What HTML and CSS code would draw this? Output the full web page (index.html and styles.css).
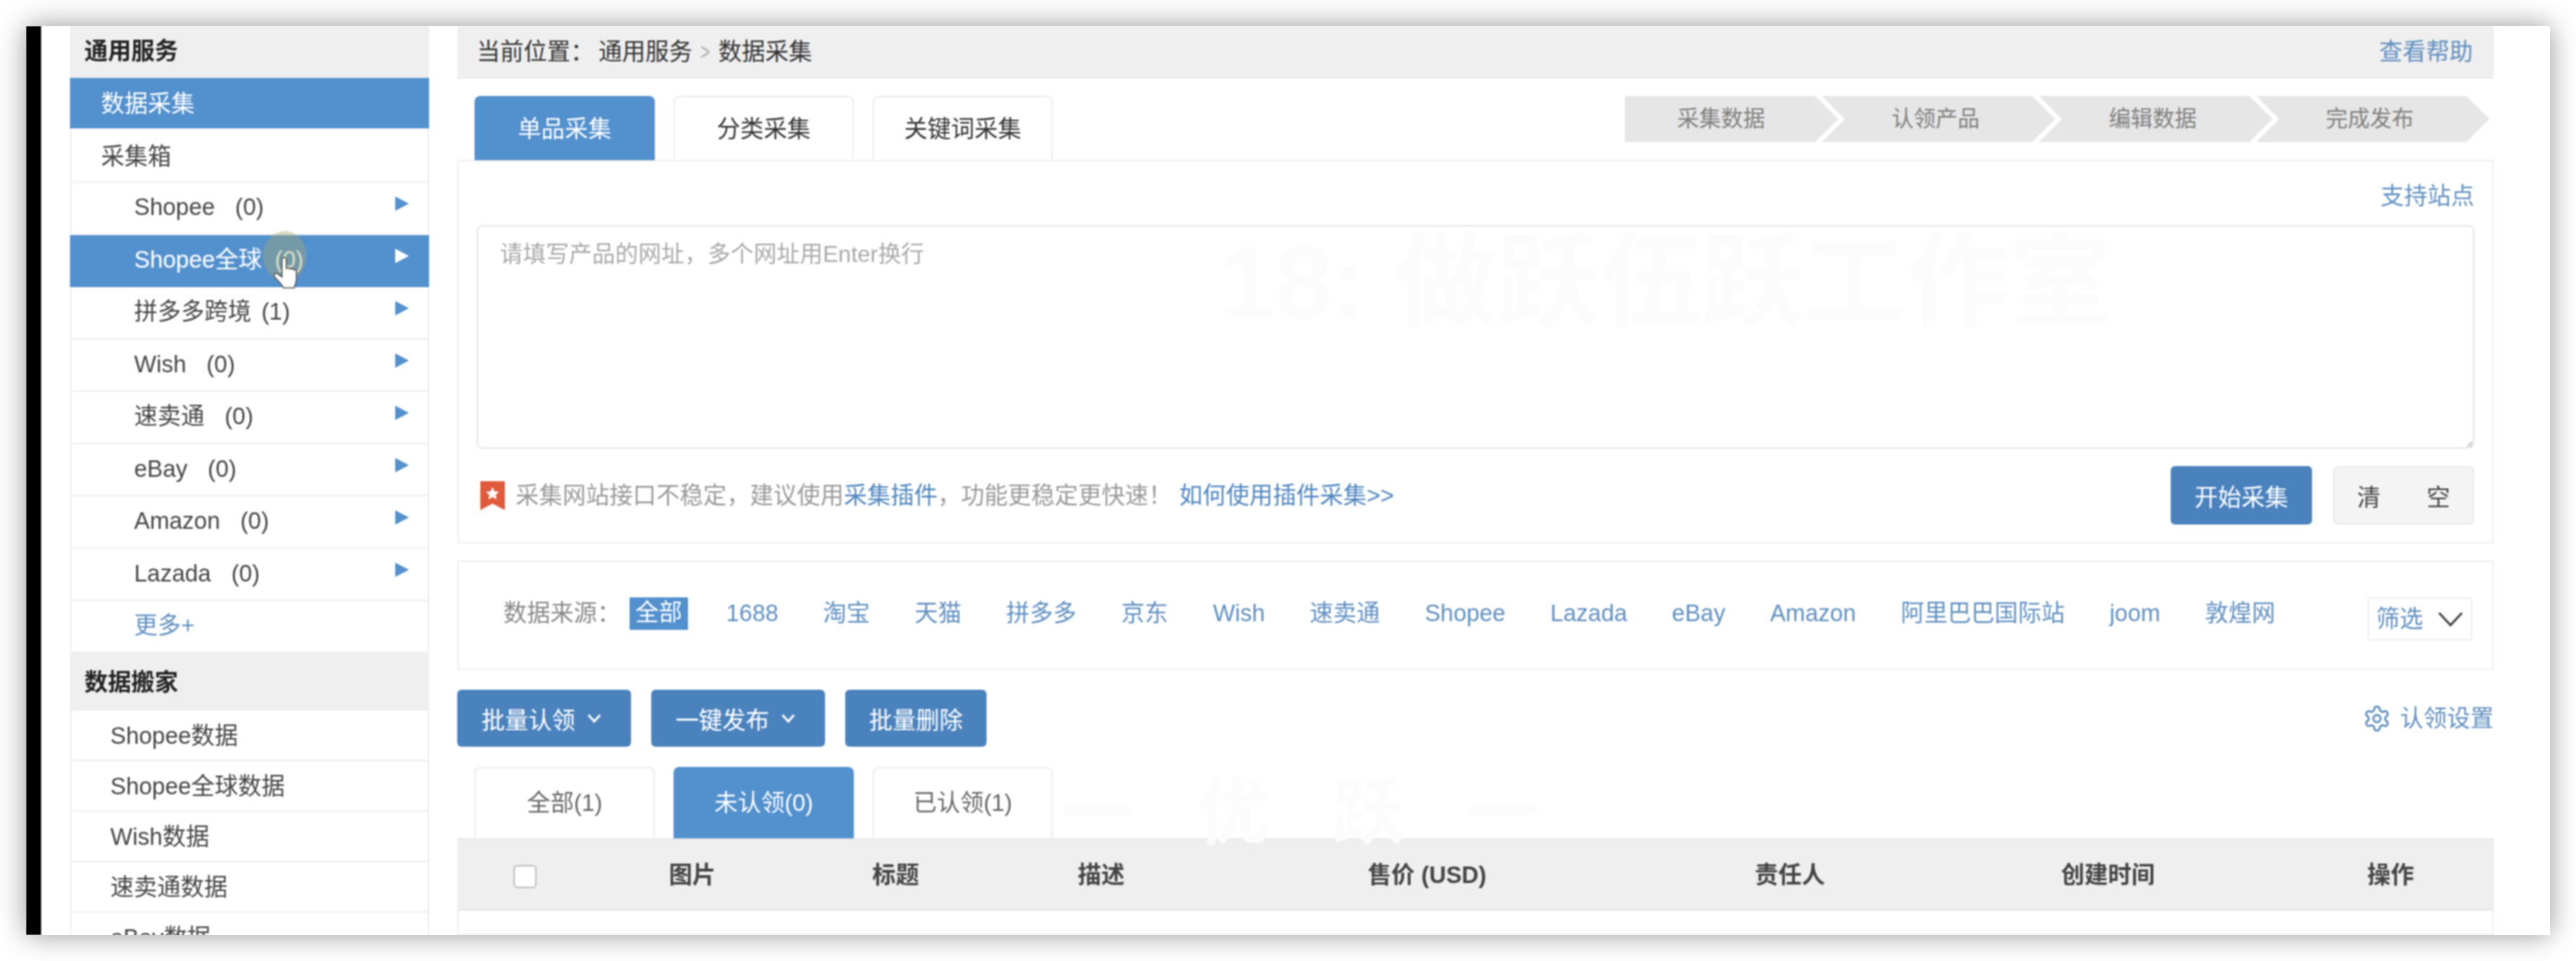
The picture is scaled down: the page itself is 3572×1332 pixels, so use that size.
FILE: index.html
```html
<!DOCTYPE html>
<html lang="zh-CN">
<head>
    <meta charset="UTF-8">
    <title>数据采集</title>
    <link rel="stylesheet" href="styles.css">
</head>
<body>
    <div class="window">
        <div class="screen">
            <div class="black-bar"></div>

            <aside class="sidebar">
                <div class="side-head">通用服务</div>
                <a href="#" class="side-item active">数据采集</a>
                <a href="#" class="side-item box-title">采集箱</a>
                <a href="#" class="side-sub"><span>Shopee<span class="count">(0)</span></span><i class="arrow"></i></a>
                <a href="#" class="side-sub active"><span>Shopee全球<span class="count">(0)</span></span><i class="arrow"></i>
                    <span class="cursor-halo"></span>
                    <svg class="cursor-hand" viewBox="0 0 34 48">
                        <path d="M12 26V6a3 3 0 0 1 6 0v12a3 3 0 0 1 5 1 3 3 0 0 1 5 1 3 3 0 0 1 4 2v10c0 6-2 9-3 13H14c-2-5-6-8-12-15-2-3 0-6 3-5l7 5z" fill="#fff" stroke="#555" stroke-width="1.6"/>
                    </svg>
                </a>
                <a href="#" class="side-sub"><span>拼多多跨境<span class="count tight">(1)</span></span><i class="arrow"></i></a>
                <a href="#" class="side-sub"><span>Wish<span class="count">(0)</span></span><i class="arrow"></i></a>
                <a href="#" class="side-sub"><span>速卖通<span class="count">(0)</span></span><i class="arrow"></i></a>
                <a href="#" class="side-sub"><span>eBay<span class="count">(0)</span></span><i class="arrow"></i></a>
                <a href="#" class="side-sub"><span>Amazon<span class="count">(0)</span></span><i class="arrow"></i></a>
                <a href="#" class="side-sub"><span>Lazada<span class="count">(0)</span></span><i class="arrow"></i></a>
                <a href="#" class="side-sub more">更多+</a>
                <div class="side-head second">数据搬家</div>
                <a href="#" class="side-move">Shopee数据</a>
                <a href="#" class="side-move">Shopee全球数据</a>
                <a href="#" class="side-move">Wish数据</a>
                <a href="#" class="side-move">速卖通数据</a>
                <a href="#" class="side-move">eBay数据</a>
            </aside>

            <main class="main">
                <div class="watermark">18: 做跃伍跃工作室</div>
                <div class="watermark lower">一 优 跃 一</div>

                <div class="crumb">
                    <div class="crumb-path">
                        <span class="crumb-label">当前位置：</span>
                        <span>通用服务</span>
                        <span class="crumb-sep">&gt;</span>
                        <span>数据采集</span>
                    </div>
                    <a href="#" class="link">查看帮助</a>
                </div>

                <div class="tab-row">
                    <div class="tabs">
                        <a href="#" class="tab active">单品采集</a>
                        <a href="#" class="tab">分类采集</a>
                        <a href="#" class="tab">关键词采集</a>
                    </div>
                    <div class="steps">
                        <div class="step">采集数据</div>
                        <div class="step">认领产品</div>
                        <div class="step">编辑数据</div>
                        <div class="step">完成发布</div>
                    </div>
                </div>

                <section class="collect-card">
                    <div class="site-row"><a href="#" class="link">支持站点</a></div>
                    <textarea class="url-input" placeholder="请填写产品的网址，多个网址用Enter换行"></textarea>
                    <div class="notice-row">
                        <div class="notice">
                            <svg class="notice-icon" viewBox="0 0 34 40">
                                <path d="M0 0H34V40L17 31 0 40z" fill="#e0593a"/>
                                <path d="M17 8l2.8 6 6.4.7-4.8 4.3 1.4 6.3-5.8-3.3-5.8 3.3 1.4-6.3-4.8-4.3 6.4-.7z" fill="#fff"/>
                            </svg>
                            <span>采集网站接口不稳定，建议使用<a href="#" class="link strong">采集插件</a>，功能更稳定更快速！</span>
                            <a href="#" class="link strong howto">如何使用插件采集&gt;&gt;</a>
                        </div>
                        <div class="notice-btns">
                            <button class="btn">开始采集</button>
                            <button class="btn plain">清<span class="wide-gap"></span>空</button>
                        </div>
                    </div>
                </section>

                <section class="source-card">
                    <span class="source-label">数据来源：</span>
                    <a href="#" class="chip">全部</a>
                    <div class="sources">
                        <a href="#">1688</a>
                        <a href="#">淘宝</a>
                        <a href="#">天猫</a>
                        <a href="#">拼多多</a>
                        <a href="#">京东</a>
                        <a href="#">Wish</a>
                        <a href="#">速卖通</a>
                        <a href="#">Shopee</a>
                        <a href="#">Lazada</a>
                        <a href="#">eBay</a>
                        <a href="#">Amazon</a>
                        <a href="#">阿里巴巴国际站</a>
                        <a href="#">joom</a>
                        <a href="#">敦煌网</a>
                    </div>
                    <div class="filter">筛选
                        <svg viewBox="0 0 34 20"><path d="M2 2l15 16L32 2" fill="none" stroke="#444" stroke-width="3"/></svg>
                    </div>
                </section>

                <div class="action-row">
                    <div class="actions">
                        <button class="btn action">批量认领<svg class="caret" viewBox="0 0 20 14"><path d="M2 2l8 9 8-9" fill="none" stroke="#fff" stroke-width="3"/></svg></button>
                        <button class="btn action">一键发布<svg class="caret" viewBox="0 0 20 14"><path d="M2 2l8 9 8-9" fill="none" stroke="#fff" stroke-width="3"/></svg></button>
                        <button class="btn action short">批量删除</button>
                    </div>
                    <a href="#" class="link settings">
                        <svg class="gear" viewBox="0 0 24 24" fill="none" stroke="#5f8fc0" stroke-width="1.7">
                            <path d="M12.22 2h-.44a2 2 0 0 0-2 2v.18a2 2 0 0 1-1 1.73l-.43.25a2 2 0 0 1-2 0l-.15-.08a2 2 0 0 0-2.73.73l-.22.38a2 2 0 0 0 .73 2.73l.15.1a2 2 0 0 1 1 1.72v.51a2 2 0 0 1-1 1.74l-.15.09a2 2 0 0 0-.73 2.73l.22.38a2 2 0 0 0 2.73.73l.15-.08a2 2 0 0 1 2 0l.43.25a2 2 0 0 1 1 1.73V20a2 2 0 0 0 2 2h.44a2 2 0 0 0 2-2v-.18a2 2 0 0 1 1-1.73l.43-.25a2 2 0 0 1 2 0l.15.08a2 2 0 0 0 2.73-.73l.22-.39a2 2 0 0 0-.73-2.73l-.15-.08a2 2 0 0 1-1-1.74v-.5a2 2 0 0 1 1-1.74l.15-.09a2 2 0 0 0 .73-2.73l-.22-.38a2 2 0 0 0-2.73-.73l-.15.08a2 2 0 0 1-2 0l-.43-.25a2 2 0 0 1-1-1.73V4a2 2 0 0 0-2-2z"/>
                            <circle cx="12" cy="12" r="3"/>
                        </svg>
                        认领设置
                    </a>
                </div>

                <div class="tabs claim-tabs">
                    <a href="#" class="tab">全部(1)</a>
                    <a href="#" class="tab active">未认领(0)</a>
                    <a href="#" class="tab">已认领(1)</a>
                </div>

                <div class="table-head">
                    <div><input type="checkbox" class="check"></div>
                    <div>图片</div>
                    <div>标题</div>
                    <div>描述</div>
                    <div>售价 (USD)</div>
                    <div>责任人</div>
                    <div>创建时间</div>
                    <div>操作</div>
                </div>
                <div class="table-body"></div>
            </main>
        </div>
    </div>
</body>
</html>
```

FILE: styles.css
```css
:root {
    --blue: #5290ce;
    --btn-blue: #4a82bd;
    --link: #5f8fc0;
    --line: #eeeeee;
    --head: #efefef;
}

* {
    margin: 0;
    padding: 0;
    box-sizing: border-box;
}

html, body {
    height: 100%;
}

body {
    font-family: "Liberation Sans", "Noto Sans CJK SC", sans-serif;
    font-size: 32.5px;
    line-height: 40px;
    color: #444;
    background: #fff;
    padding: 36px;
    overflow: hidden;
}

a {
    text-decoration: none;
    color: inherit;
}

.window {
    height: 1260px;
    background: #fff;
    overflow: hidden;
    box-shadow: 0 0 36px rgba(0, 0, 0, 0.42);
}

.screen {
    display: flex;
    height: 100%;
    filter: blur(1px);
}

.black-bar {
    width: 21px;
    flex-shrink: 0;
    background: #000;
}

/* sidebar */

.sidebar {
    width: 498px;
    flex-shrink: 0;
    margin-left: 40px;
    border-right: 2px solid var(--line);
    border-left: 2px solid var(--line);
}

.side-head {
    height: 72px;
    line-height: 70px;
    padding-left: 20px;
    margin-left: -2px;
    font-weight: bold;
    color: #222;
    background: #f0efef;
}

.side-head.second {
    height: 82px;
    line-height: 86px;
}

.side-item {
    display: block;
    height: 70px;
    line-height: 73px;
    padding-left: 41px;
}

.box-title {
    height: 75px;
    line-height: 78px;
    border-bottom: 2px solid var(--line);
}

.active {
    background: var(--blue);
    color: #fff;
}

.side-item.active {
    margin-left: -2px;
    margin-right: -2px;
    padding-left: 43px;
}

.side-sub {
    position: relative;
    display: flex;
    justify-content: space-between;
    align-items: center;
    height: 72.5px;
    padding: 0 26px 2px 87px;
    border-bottom: 2px solid var(--line);
}

.side-sub.active {
    margin: 0 -2px;
    padding-left: 89px;
    padding-right: 28px;
    padding-bottom: 4px;
    border-bottom: none;
}

.side-sub.more {
    height: 70px;
    color: var(--link);
    border-bottom: none;
}

.count {
    margin-left: 28px;
}

.tight {
    margin-left: 14px;
}

.side-sub.active .count {
    margin-left: 18px;
}

.arrow {
    width: 19px;
    height: 20px;
    margin-bottom: 10px;
    background: var(--blue);
    clip-path: polygon(0 0, 100% 50%, 0 100%);
}

.side-sub.active .arrow {
    background: #fff;
}

.side-move {
    display: block;
    height: 70px;
    line-height: 70px;
    padding-left: 54px;
    border-bottom: 2px solid var(--line);
}

/* cursor over the active row */

.cursor-halo {
    position: absolute;
    left: 268px;
    top: -6px;
    width: 60px;
    height: 70px;
    border-radius: 50%;
    background: rgba(170, 170, 110, 0.4);
}

.cursor-hand {
    position: absolute;
    left: 282px;
    top: 28px;
    width: 34px;
    height: 48px;
}

/* main */

.main {
    position: relative;
    width: 2824px;
    flex-shrink: 0;
    margin-left: 39px;
    display: flex;
    flex-direction: column;
}

.watermark {
    position: absolute;
    left: 1055px;
    top: 285px;
    font-size: 142px;
    font-weight: bold;
    line-height: 1;
    color: #fcfcfc;
    white-space: nowrap;
}

.watermark.lower {
    left: 838px;
    top: 1040px;
    font-size: 100px;
    letter-spacing: 30px;
}

.link {
    color: var(--link);
}

.link.strong {
    color: #4f86bf;
}

.crumb {
    display: flex;
    justify-content: space-between;
    align-items: center;
    height: 73px;
    padding: 0 29px 0 27px;
    background: var(--head);
    border-bottom: 2px solid #e9e9e9;
    color: #333;
    flex-shrink: 0;
}

.crumb-path {
    display: flex;
    align-items: center;
}

.crumb-label {
    width: 169px;
}

.crumb-sep {
    width: 36px;
    text-align: center;
    color: #aaa;
    font-weight: normal;
    transform: scaleX(0.7);
}

.tab-row {
    position: relative;
    display: flex;
    justify-content: space-between;
    margin-top: 24px;
    padding: 0 6px 0 24px;
    flex-shrink: 0;
}

.tabs {
    display: flex;
    gap: 26px;
}

.tab {
    width: 250px;
    height: 89px;
    line-height: 88px;
    text-align: center;
    color: #333;
    border: 2px solid var(--line);
    border-bottom: none;
    border-radius: 8px 8px 0 0;
    background: #fff;
}

.tab.active {
    color: #fff;
    background: var(--blue);
    border-color: var(--blue);
}

.steps {
    display: flex;
    align-items: flex-start;
}

.step {
    width: 324px;
    height: 64px;
    line-height: 62px;
    margin-left: -23px;
    padding-right: 8px;
    text-align: center;
    font-size: 30.5px;
    color: #808080;
    background: #e6e6e6;
    clip-path: polygon(0 0, calc(100% - 32px) 0, 100% 50%, calc(100% - 32px) 100%, 0 100%, 32px 50%);
}

.step:first-child {
    width: 296px;
    margin-left: 0;
    padding-right: 29px;
    clip-path: polygon(0 0, calc(100% - 32px) 0, 100% 50%, calc(100% - 32px) 100%, 0 100%);
}

.collect-card {
    height: 531px;
    padding: 0 25px;
    border: 2px solid var(--line);
    flex-shrink: 0;
}

.site-row {
    display: flex;
    justify-content: flex-end;
    height: 88px;
    padding-top: 28px;
}

.url-input {
    display: block;
    width: 100%;
    height: 310px;
    padding: 18px 30px;
    font-family: inherit;
    font-size: 32px;
    line-height: 40px;
    color: #333;
    border: 2px solid #e6e6e6;
    border-radius: 8px;
    outline: none;
}

.url-input::placeholder {
    color: #a9a9a9;
}

.notice-row {
    display: flex;
    justify-content: space-between;
    align-items: center;
    margin-top: 24px;
}

.notice {
    display: flex;
    align-items: center;
    color: #999;
    padding-left: 5px;
}

.notice-icon {
    width: 34px;
    height: 40px;
    margin-right: 15px;
}

.howto {
    margin-left: 10px;
}

.notice-btns {
    display: flex;
    gap: 29px;
}

.btn {
    width: 196px;
    height: 81px;
    font-family: inherit;
    font-size: 32.5px;
    color: #fff;
    background: var(--btn-blue);
    border: none;
    border-radius: 6px;
}

.btn.plain {
    color: #444;
    background: #f4f4f4;
    border: 2px solid #ebebeb;
}

.wide-gap {
    display: inline-block;
    width: 64px;
}

.source-card {
    display: flex;
    align-items: center;
    height: 152px;
    margin-top: 24px;
    padding: 0 28px 6px 62px;
    border: 2px solid var(--line);
    flex-shrink: 0;
}

.source-label {
    width: 175px;
    color: #888;
}

.chip {
    width: 81px;
    height: 45px;
    line-height: 43px;
    text-align: center;
    color: #fff;
    background: var(--blue);
}

.sources {
    display: flex;
    gap: 62px;
    margin-left: 53px;
    color: var(--link);
    white-space: nowrap;
}

.filter {
    display: flex;
    align-items: center;
    justify-content: space-between;
    width: 145px;
    height: 60px;
    margin-left: auto;
    margin-top: 16px;
    padding: 0 10px;
    color: var(--link);
    border: 2px solid var(--line);
}

.filter svg {
    width: 36px;
    height: 22px;
}

.action-row {
    display: flex;
    justify-content: space-between;
    align-items: center;
    height: 79px;
    margin-top: 27px;
    flex-shrink: 0;
}

.actions {
    display: flex;
    gap: 28px;
}

.btn.action {
    display: flex;
    align-items: center;
    justify-content: center;
    gap: 16px;
    width: 241px;
    height: 79px;
    padding-right: 8px;
}

.btn.action.short {
    width: 196px;
    padding-right: 0;
}

.caret {
    width: 20px;
    height: 14px;
}

.settings {
    display: flex;
    align-items: center;
    gap: 12px;
    line-height: 42px;
}

.gear {
    width: 40px;
    height: 40px;
}

.claim-tabs {
    margin-top: 28px;
    padding-left: 24px;
    flex-shrink: 0;
}

.claim-tabs .tab {
    height: 99px;
    line-height: 96px;
    color: #666;
}

.claim-tabs .tab.active {
    color: #fff;
}

.table-head {
    display: grid;
    grid-template-columns: 188px 276px 288px 282px 622px 384px 498px 286px;
    align-items: center;
    height: 100px;
    padding-top: 2px;
    text-align: center;
    font-weight: bold;
    color: #444;
    background: var(--head);
    border-top: 2px solid #e6e6e6;
    border-bottom: 2px solid #e4e4e4;
    flex-shrink: 0;
}

.check {
    display: block;
    width: 32px;
    height: 32px;
    margin: 4px auto 0;
    appearance: none;
    background: #fff;
    border: 2px solid #bdbdbd;
    border-radius: 5px;
}

.table-body {
    flex: 1;
    border: 2px solid var(--line);
    border-top: none;
}
```
